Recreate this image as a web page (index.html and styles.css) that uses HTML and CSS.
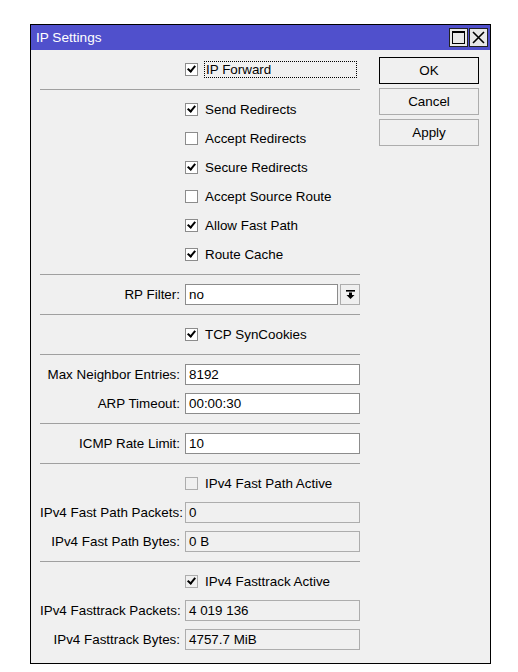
FILE: index.html
```html
<!DOCTYPE html>
<html>
<head>
<meta charset="utf-8">
<link rel="stylesheet" href="styles.css">
</head>
<body>
<div class="window">
  <div class="titlebar">
    <span class="title">IP Settings</span>
    <div class="tbtns">
      <span class="tbtn"><svg width="17" height="17" viewBox="0 0 17 17"><rect x="2.5" y="2.5" width="12" height="12" fill="none" stroke="#000" stroke-width="1"/><line x1="2" y1="3" x2="15" y2="3" stroke="#000" stroke-width="2"/></svg></span>
      <span class="tbtn"><svg width="17" height="17" viewBox="0 0 17 17"><path d="M3 3 L14 14 M14 3 L3 14" stroke="#000" stroke-width="1.6" fill="none"/></svg></span>
    </div>
  </div>
  <div class="content">
    <div class="form">
      <div class="section">
        <div class="row"><span></span><label class="check"><span class="box on"></span><span class="focus">IP Forward</span></label></div>
      </div>
      <div class="sep"></div>
      <div class="section">
        <div class="row"><span></span><label class="check"><span class="box on"></span>Send Redirects</label></div>
        <div class="row"><span></span><label class="check"><span class="box"></span>Accept Redirects</label></div>
        <div class="row"><span></span><label class="check"><span class="box on"></span>Secure Redirects</label></div>
        <div class="row"><span></span><label class="check"><span class="box"></span>Accept Source Route</label></div>
        <div class="row"><span></span><label class="check"><span class="box on"></span>Allow Fast Path</label></div>
        <div class="row"><span></span><label class="check"><span class="box on"></span>Route Cache</label></div>
      </div>
      <div class="sep"></div>
      <div class="section">
        <div class="row"><span class="lbl">RP Filter:</span>
          <div class="combo"><span class="field">no</span><span class="drop"><svg width="11" height="11" viewBox="0 0 11 11"><rect x="1" y="1" width="9" height="1.6" fill="#000"/><path d="M4 3.5 H7 V6 H9.5 L5.5 10 L1.5 6 H4 Z" fill="#000"/></svg></span></div>
        </div>
      </div>
      <div class="sep"></div>
      <div class="section">
        <div class="row"><span></span><label class="check"><span class="box on"></span>TCP SynCookies</label></div>
      </div>
      <div class="sep"></div>
      <div class="section">
        <div class="row"><span class="lbl">Max Neighbor Entries:</span><span class="field">8192</span></div>
        <div class="row"><span class="lbl">ARP Timeout:</span><span class="field">00:00:30</span></div>
      </div>
      <div class="sep"></div>
      <div class="section">
        <div class="row"><span class="lbl">ICMP Rate Limit:</span><span class="field">10</span></div>
      </div>
      <div class="sep"></div>
      <div class="section">
        <div class="row"><span></span><label class="check ro"><span class="box"></span>IPv4 Fast Path Active</label></div>
        <div class="row"><span class="lbl">IPv4 Fast Path Packets:</span><span class="field ro">0</span></div>
        <div class="row"><span class="lbl">IPv4 Fast Path Bytes:</span><span class="field ro">0 B</span></div>
      </div>
      <div class="sep"></div>
      <div class="section">
        <div class="row"><span></span><label class="check ro"><span class="box on"></span>IPv4 Fasttrack Active</label></div>
        <div class="row"><span class="lbl">IPv4 Fasttrack Packets:</span><span class="field ro">4 019 136</span></div>
        <div class="row"><span class="lbl">IPv4 Fasttrack Bytes:</span><span class="field ro">4757.7 MiB</span></div>
      </div>
    </div>
    <div class="buttons">
      <button class="btn default">OK</button>
      <button class="btn">Cancel</button>
      <button class="btn">Apply</button>
    </div>
  </div>
</div>
</body>
</html>
```

FILE: styles.css
```css
html, body {
  margin: 0;
  padding: 0;
  background: #ffffff;
}
body {
  padding: 24px 0 0 30px;
  font-family: "Liberation Sans", Arial, sans-serif;
  font-size: 13.4px;
  color: #000;
}
.window {
  width: 459px;
  height: 638px;
  border: 1px solid #000;
  background: #f0f0f0;
  display: flex;
  flex-direction: column;
}
.titlebar {
  height: 25px;
  background: #5050cc;
  display: flex;
  align-items: center;
  justify-content: space-between;
  padding-left: 5px;
}
.title {
  color: #fff;
  font-size: 13.6px;
}
.tbtns {
  display: flex;
  gap: 1px;
  margin-right: 2px;
}
.tbtn {
  width: 17px;
  height: 17px;
  border: 1px solid #222;
  background: #e8e8e8;
  display: flex;
}
.content {
  display: flex;
  padding: 9px 10px 0 9px;
  gap: 19px;
}
.form {
  width: 320px;
  display: flex;
  flex-direction: column;
}
.section {
  display: flex;
  flex-direction: column;
  gap: 8px;
}
.sep {
  height: 1px;
  background: #a0a0a0;
  margin: 9px 0;
}
.row {
  display: grid;
  grid-template-columns: 140px 175px;
  column-gap: 5px;
  height: 21px;
  align-items: center;
}
.lbl {
  text-align: right;
  white-space: nowrap;
}
.check {
  display: flex;
  align-items: center;
  gap: 7px;
  white-space: nowrap;
}
.box {
  width: 11px;
  height: 11px;
  border: 1px solid #8c8c8c;
  background: #fff;
  position: relative;
  flex: none;
}
.check.ro .box {
  background: #f0f0f0;
  border-color: #adadad;
}
.box.on::after {
  content: "";
  position: absolute;
  left: 3px;
  top: 0px;
  width: 3px;
  height: 6px;
  border-right: 2px solid #000;
  border-bottom: 2px solid #000;
  transform: rotate(40deg);
  transform-origin: center;
}
.focus {
  outline: 1px dotted #000;
  outline-offset: 0;
  width: 150px;
  padding-left: 1px;
  line-height: 15px;
}
.field {
  box-sizing: border-box;
  height: 21px;
  border: 1px solid #8c8c8c;
  background: #fff;
  padding: 0 3px;
  line-height: 19px;
  white-space: nowrap;
  display: block;
}
.field.ro {
  background: #f0f0f0;
  border-color: #adadad;
}
.combo {
  display: flex;
  gap: 2px;
}
.combo .field {
  flex: 1;
}
.drop {
  box-sizing: border-box;
  width: 20px;
  height: 21px;
  border: 1px solid #adadad;
  display: flex;
  align-items: center;
  justify-content: center;
}
.buttons {
  display: flex;
  flex-direction: column;
  gap: 4px;
  margin-top: -2px;
}
.btn {
  box-sizing: border-box;
  width: 100px;
  height: 27px;
  background: #f0f0f0;
  border: 1px solid #adadad;
  font-family: "Liberation Sans", Arial, sans-serif;
  font-size: 13.4px;
  color: #000;
  padding: 0;
}
.btn.default {
  border: 1px solid #000;
  box-shadow: inset 0 0 0 1px #f0f0f0;
}
```
